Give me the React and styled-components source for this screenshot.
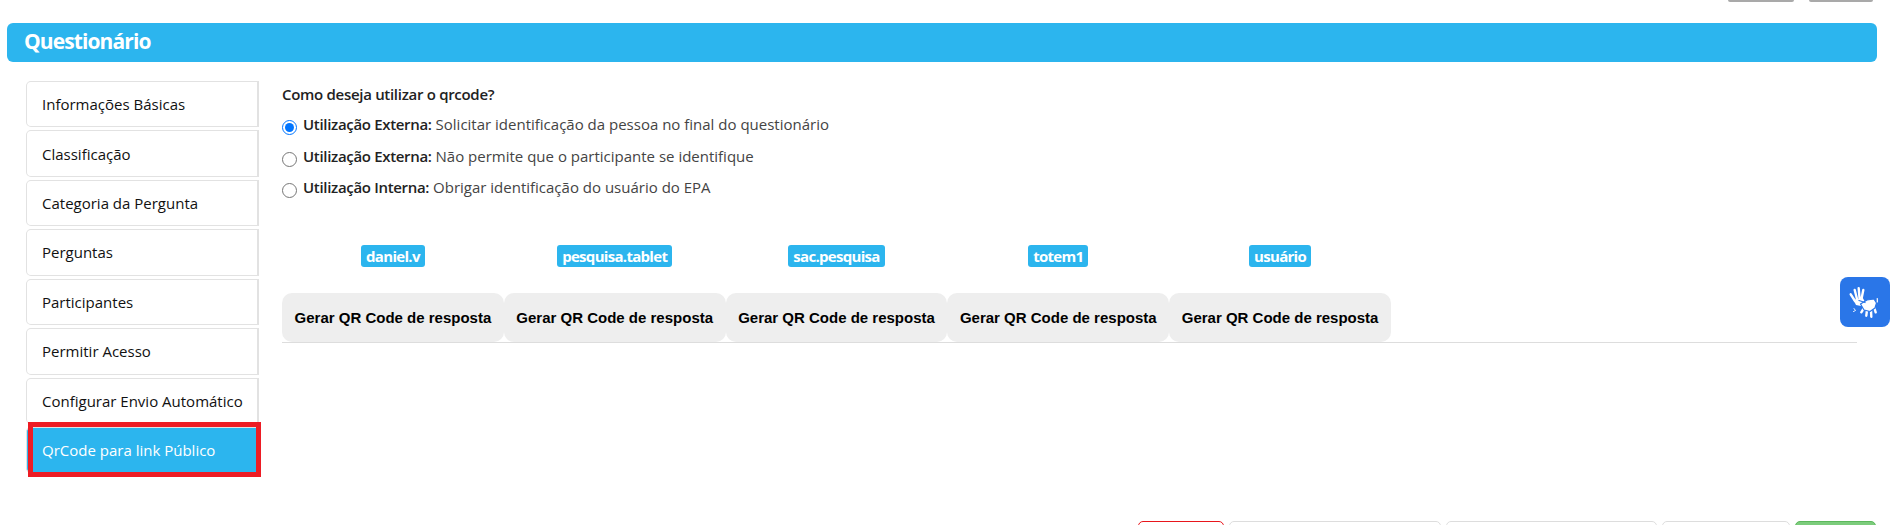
import React from 'react';
import styled, { createGlobalStyle } from 'styled-components';

const GlobalStyle = createGlobalStyle`
html, body {
    margin: 0;
    height: 525px;
    overflow: hidden;
    background: #fff;
    font-family: "Open Sans", "Liberation Sans", sans-serif;
    color: #212529;
}
`

const MENU = [
    'Informações Básicas',
    'Classificação',
    'Categoria da Pergunta',
    'Perguntas',
    'Participantes',
    'Permitir Acesso',
    'Configurar Envio Automático',
    'QrCode para link Público',
];

const OPTIONS = [
    { title: 'Utilização Externa:', text: 'Solicitar identificação da pessoa no final do questionário', checked: true },
    { title: 'Utilização Externa:', text: 'Não permite que o participante se identifique' },
    { title: 'Utilização Interna:', text: 'Obrigar identificação do usuário do EPA' },
];

const USERS = ['daniel.v', 'pesquisa.tablet', 'sac.pesquisa', 'totem1', 'usuário'];

const BOTTOM_BUTTONS = [
    { width: 86, color: '#e8161c' },
    { width: 212 },
    { width: 211 },
    { width: 128 },
    { width: 81, color: '#5cb85c', fill: '#7ccc7c' },
];

const HandsIcon = () => (
    <svg width="50" height="50" viewBox="0 0 50 50" fill="none" stroke="#fff" strokeLinecap="round" strokeLinejoin="round">
        {/* raised hand */}
        <path strokeWidth="2.400" d="M15 24L10.700 17.300M17 22L14.700 13M19.500 21L18.700 11.300M21.500 22L23.300 13" />
        <path fill="#fff" stroke="none" d="M13.500 23L22.500 20.500L24.500 24L21 29L16 28z" />
        {/* lower hand */}
        <path strokeWidth="2.400" d="M24 31L21.300 35.300M27 33L26.300 38.700M31 33L31.300 39.700M34 30L35.700 35.300" />
        <path fill="#fff" stroke="#2a76e8" strokeWidth="1.200" d="M20.500 27L27 23L34 22L36.500 26L35 31L30 34.500L24 33z" />
        <path stroke="#2a76e8" strokeWidth="1.300" d="M19 23.500L25 25.500" />
        <path strokeWidth="1.200" d="M37.300 21.500V25" />
        <path strokeWidth="0.900" d="M14 31.500L15.500 33.500L13.500 34.500" />
    </svg>
);

const App = () => {
    return (
        <Page>
            <GlobalStyle />
            <TopBar>
                <TopButton $width={66} />
                <TopButton $width={64} />
            </TopBar>
            <Title>Questionário</Title>
            <Content>
                <Sidebar>
                    {MENU.map((label, i) => (
                        <MenuItem key={label} $active={i === MENU.length - 1}>{label}</MenuItem>
                    ))}
                    <Highlight />
                </Sidebar>
                <Main>
                    <Question>Como deseja utilizar o qrcode?</Question>
                    <Options>
                        {OPTIONS.map((opt) => (
                            <Option key={opt.text}>
                                <Radio type="radio" name="uso" defaultChecked={opt.checked} />
                                <span><strong>{opt.title}</strong> {opt.text}</span>
                            </Option>
                        ))}
                    </Options>
                    <QrGrid>
                        {USERS.map((user) => (
                            <QrColumn key={user}>
                                <UserBadge>{user}</UserBadge>
                                <QrTab>Gerar QR Code de resposta</QrTab>
                            </QrColumn>
                        ))}
                    </QrGrid>
                </Main>
            </Content>
            <Footer>
                {BOTTOM_BUTTONS.map((btn, i) => (
                    <FooterButton key={i} $width={btn.width} $color={btn.color} $fill={btn.fill} />
                ))}
            </Footer>
            <AccessWidget aria-label="Libras"><HandsIcon /></AccessWidget>
        </Page>
    );
};
export default App;


const Page = styled.div`
position: relative;
height: 525px;
overflow: hidden;
`

const TopBar = styled.div`
display: flex;
justify-content: flex-end;
gap: 15px;
height: 2px;
padding-right: 20px;
margin-bottom: 21px;
overflow: hidden;
`

const TopButton = styled.div`
width: ${(p) => p.$width}px;
height: 2px;
background: #a9a9a9;
border-radius: 0 0 3px 3px;
`

const Title = styled.h1`
display: flex;
align-items: center;
box-sizing: border-box;
height: 39px;
margin: 0 16px 0 7px;
padding: 0 0 3px 17px;
background: #2cb5ee;
border-radius: 6px;
color: #fff;
font-size: 21px;
font-weight: 700;
letter-spacing: -0.9px;
`

const Content = styled.div`
display: flex;
height: 459px;
padding: 19px 36px 0 26px;
box-sizing: border-box;
`

const Sidebar = styled.div`
position: relative;
flex: 0 0 233px;
`

const MenuItem = styled.div`
display: flex;
align-items: center;
box-sizing: border-box;
height: 46.43px;
margin-bottom: 3px;
padding-left: 15px;
border: 1px solid #e2e2e2;
border-right-width: 2px;
border-radius: 5px 0 0 5px;
font-size: 15px;
color: ${(p) => (p.$active ? '#fff' : '#111')};
background: ${(p) => (p.$active ? '#2cb5ee' : '#fff')};
`

const Highlight = styled.div`
position: absolute;
left: 2px;
top: 341px;
width: 233px;
height: 55px;
box-sizing: border-box;
border: 5px solid #ed1c24;
`

const Main = styled.div`
flex: 1;
margin-left: 23px;
min-width: 0;
`

const Question = styled.div`
height: 26px;
font-size: 15px;
font-weight: 600;
line-height: 26px;
letter-spacing: -0.3px;
color: #222;
`

const Options = styled.div`
display: flex;
flex-direction: column;
gap: 11.500px;
margin-top: 7px;
`

const Option = styled.label`
display: flex;
height: 20px;
align-items: flex-start;
font-size: 15px;
line-height: 20px;
color: #444;

strong {
    font-weight: 600;
    letter-spacing: -0.32px;
    color: #222;
}
`

const Radio = styled.input`
flex: 0 0 auto;
width: 15px;
height: 15px;
margin: 6px 6px 0 0;
accent-color: #0075ff;
`

const QrGrid = styled.div`
display: flex;
margin-top: 48px;
border-bottom: 1px solid #ddd;
`

const QrColumn = styled.div`
display: flex;
flex-direction: column;
align-items: center;
width: 221.8px;
`

const UserBadge = styled.span`
height: 22px;
padding: 0 5px;
margin-bottom: 26px;
background: #2cb5ee;
border-radius: 3px;
color: #fff;
font-size: 15px;
font-weight: 700;
line-height: 22px;
letter-spacing: -0.7px;
`

const QrTab = styled.div`
display: flex;
align-items: center;
justify-content: center;
width: 100%;
height: 49px;
background: #eee;
border-radius: 10px;
color: #000;
font-family: "Liberation Sans", Arial, sans-serif;
font-size: 15px;
font-weight: 700;
`

const Footer = styled.div`
display: flex;
justify-content: flex-end;
gap: 5px;
height: 4px;
padding-right: 17px;
overflow: hidden;
`

const FooterButton = styled.div`
flex: 0 0 auto;
width: ${(p) => p.$width}px;
height: 30px;
box-sizing: border-box;
border: 1px solid ${(p) => p.$color || '#ddd'};
border-radius: 5px;
background: ${(p) => p.$fill || '#fff'};
`

const AccessWidget = styled.div`
position: absolute;
left: 1840px;
top: 277px;
display: flex;
align-items: center;
justify-content: center;
width: 50px;
height: 50px;
background: #2a76e8;
border-radius: 8px;
`
